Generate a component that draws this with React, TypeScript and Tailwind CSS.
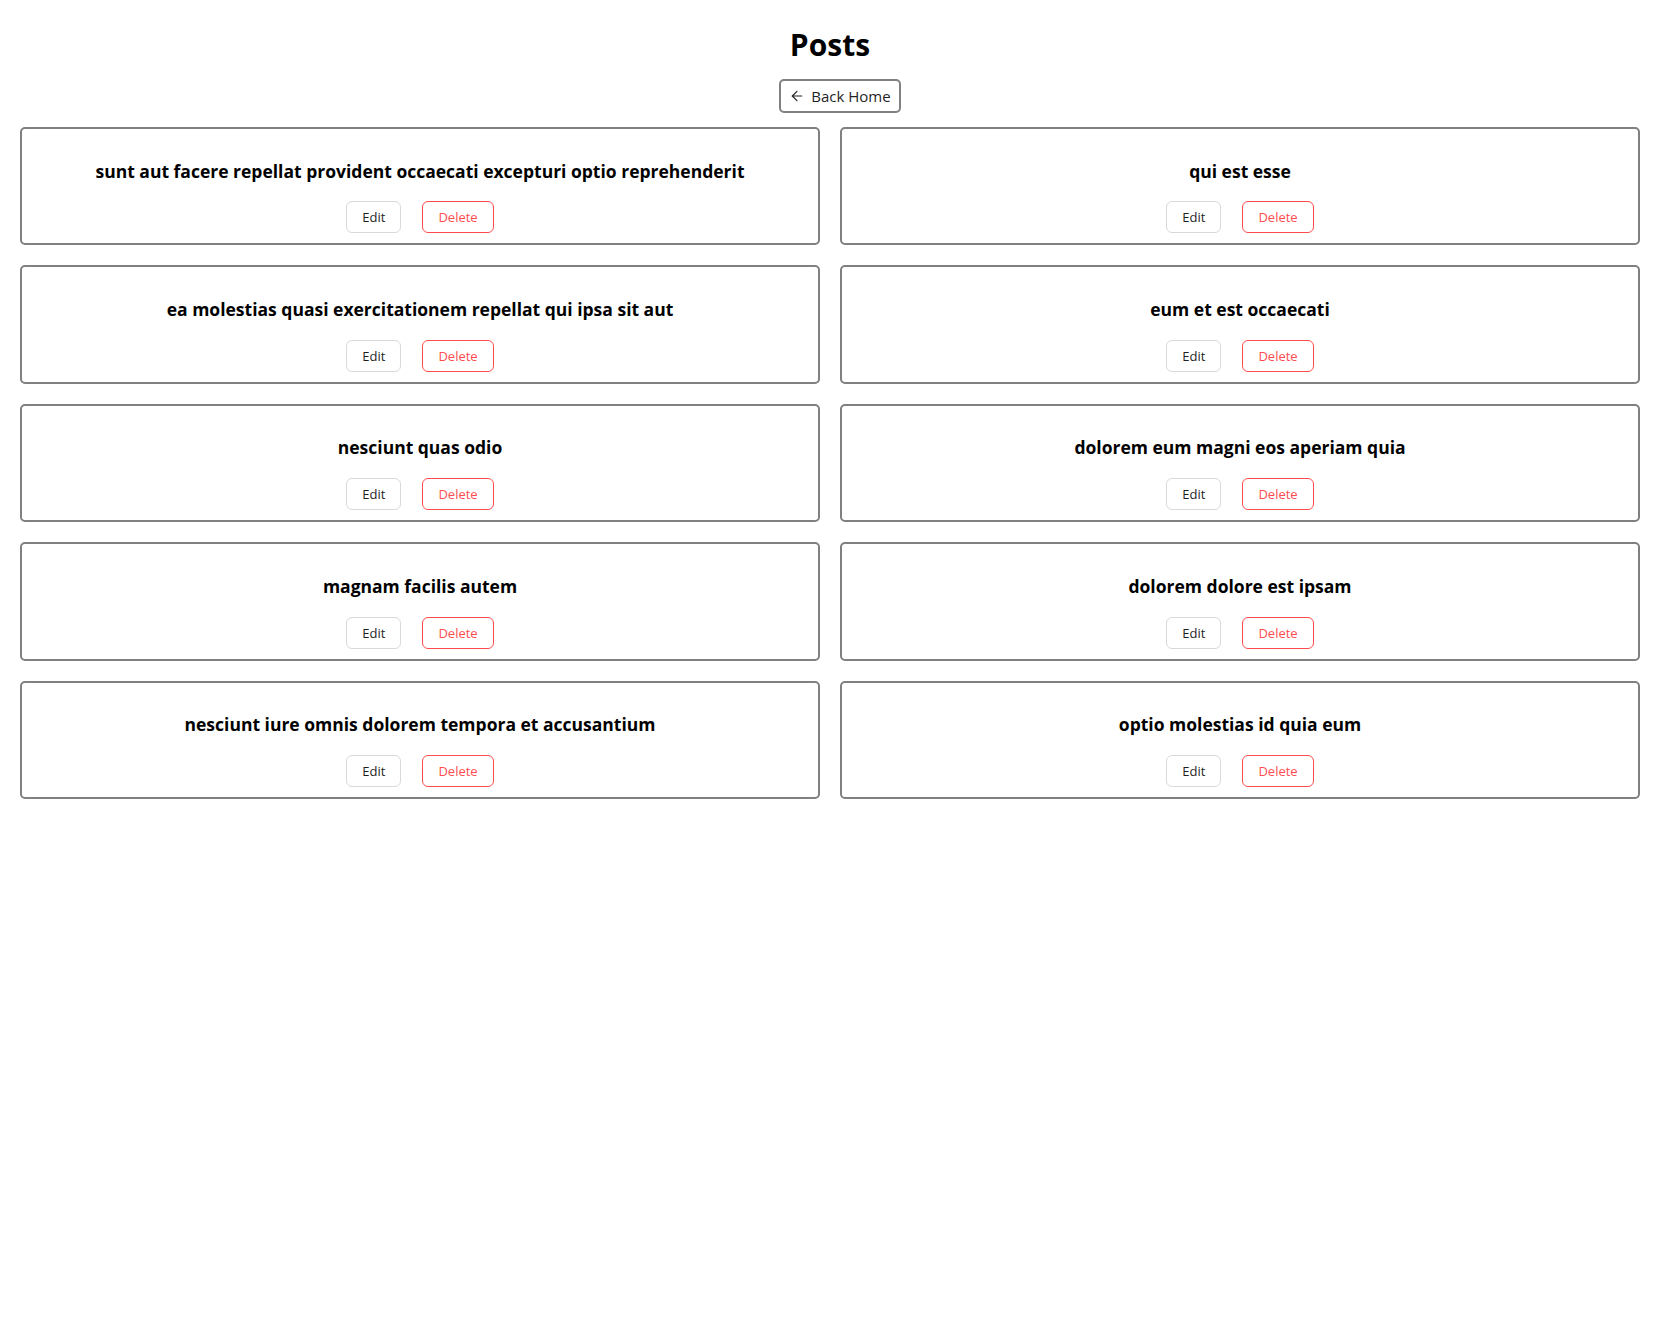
import { ArrowLeft } from "lucide-react";

type Post = {
  id: number;
  title: string;
};

const posts: Post[] = [
  { id: 1, title: "sunt aut facere repellat provident occaecati excepturi optio reprehenderit" },
  { id: 2, title: "qui est esse" },
  { id: 3, title: "ea molestias quasi exercitationem repellat qui ipsa sit aut" },
  { id: 4, title: "eum et est occaecati" },
  { id: 5, title: "nesciunt quas odio" },
  { id: 6, title: "dolorem eum magni eos aperiam quia" },
  { id: 7, title: "magnam facilis autem" },
  { id: 8, title: "dolorem dolore est ipsam" },
  { id: 9, title: "nesciunt iure omnis dolorem tempora et accusantium" },
  { id: 10, title: "optio molestias id quia eum" },
];

const smallButton =
  "h-8 rounded-md border bg-white px-[15px] text-[13px] leading-[22px] cursor-pointer";

const PostCard = ({ post }: { post: Post }) => (
  <div className="rounded-[5px] border-2 border-[#808080] p-2.5 text-center">
    <h3 className="mt-[19.7px] mb-[17.7px] text-[17.5px] font-bold leading-[25px] text-black">
      {post.title}
    </h3>
    <div className="flex justify-center gap-[21px]">
      <button type="button" className={`${smallButton} border-[#d9d9d9] text-[#1f1f1f]`}>
        Edit
      </button>
      <button type="button" className={`${smallButton} border-[#ff4d4f] text-[#ff4d4f]`}>
        Delete
      </button>
    </div>
  </div>
);

const App = () => {
  return (
    <div className="min-h-screen bg-white font-['Segoe_UI','Open_Sans',sans-serif] text-black">
      <h1 className="pt-[23px] text-center text-[30px] font-bold leading-[43px]">Posts</h1>

      <div className="mt-[13px] flex justify-center">
        <button
          type="button"
          className="ml-5 flex h-[34px] w-[122px] cursor-pointer items-center justify-center gap-1.5 rounded-[5px] border-2 border-[#808080] bg-white text-[15px] text-[#1f1f1f]"
        >
          <ArrowLeft size={16} strokeWidth={1.75} />
          Back Home
        </button>
      </div>

      <div className="mt-[14px] grid grid-cols-2 gap-5 px-5">
        {posts.map((post) => (
          <PostCard key={post.id} post={post} />
        ))}
      </div>
    </div>
  );
};

export default App;
